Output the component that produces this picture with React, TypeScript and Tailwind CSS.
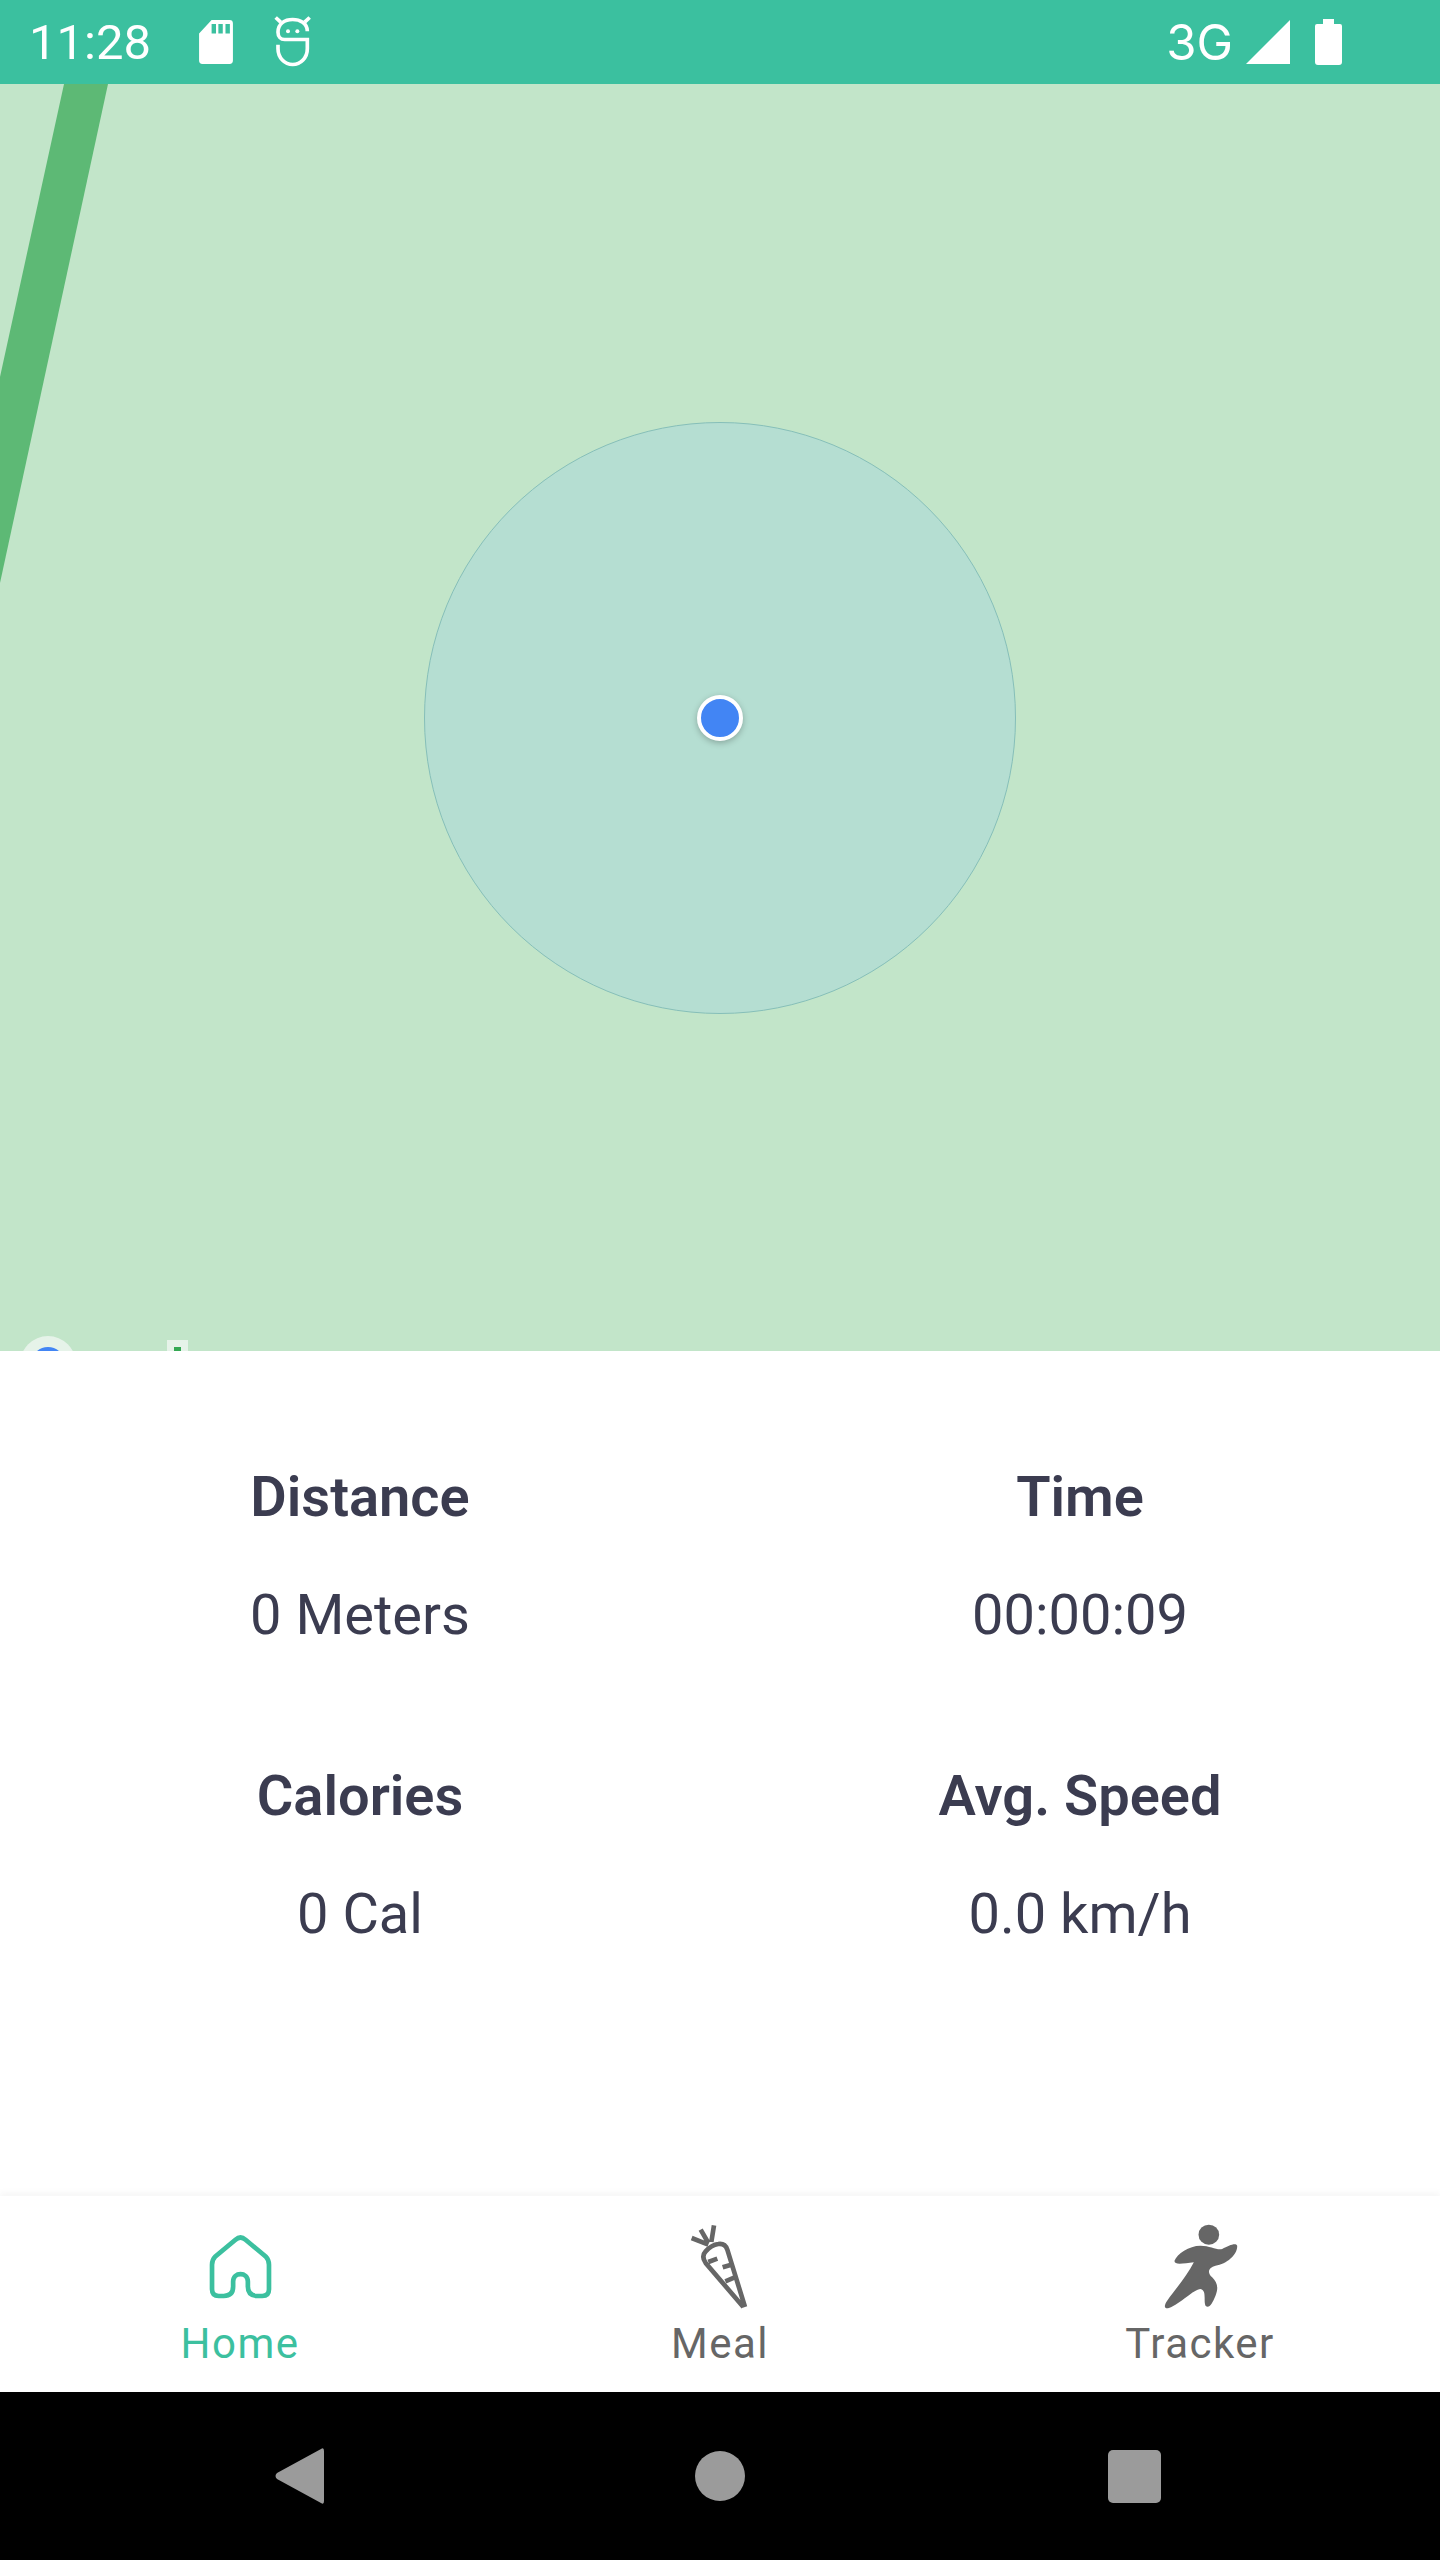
function SdCardIcon() {
  return (
    <svg viewBox="0 0 100 130" className="h-[44px] w-[34px]">
      <path
        fillRule="evenodd"
        fill="#fff"
        d="M37 0H90Q100 0 100 10V120Q100 130 90 130H10Q0 130 0 120V40ZM37 12V40H50V12ZM57 12V40H70V12ZM78 12V40H91V12Z"
      />
    </svg>
  );
}

function DroidIcon() {
  return (
    <svg viewBox="25 20 120 155" className="mb-[1px] h-[52px] w-[40px]" fill="none" stroke="#fff" strokeWidth="11">
      <path d="M128 65C128 40 105 30 84 30C60 30 40 42 40 68C40 82 48 90 60 90H128V118C128 145 108 165 84 165C60 165 40 145 40 118V106" />
      <path d="M33 24L48 38M135 24L120 38" />
      <circle cx="70" cy="65" r="6" fill="#fff" stroke="none" />
      <circle cx="98" cy="65" r="6" fill="#fff" stroke="none" />
    </svg>
  );
}

function SignalIcon() {
  return (
    <svg viewBox="0 0 44 44" className="h-[44px] w-[44px]">
      <path d="M44 0V44H0Z" fill="#fff" />
    </svg>
  );
}

function BatteryIcon() {
  return (
    <svg viewBox="0 0 27 46" className="h-[46px] w-[27px]">
      <path d="M8 0H19V5H25Q27 5 27 7V43Q27 46 24 46H3Q0 46 0 43V7Q0 5 2 5H8Z" fill="#fff" />
    </svg>
  );
}

function HomeIcon() {
  return (
    <svg viewBox="200 155 200 200" className="mb-[7px] h-[67px] w-[67px]" fill="none" stroke="#3cc09f" strokeWidth="14">
      <path d="M235 343H250Q278 343 278 315V300C278 270 322 270 322 300V315Q322 343 350 343H365Q385 343 385 323V250Q385 235 375 225L315 175Q300 162 285 175L225 225Q215 235 215 250V323Q215 343 235 343Z" />
    </svg>
  );
}

function CarrotIcon() {
  return (
    <svg viewBox="150 68 180 255" className="-mb-[2px] h-[85px] w-[60px]" fill="none" stroke="#666" strokeWidth="14">
      <path d="M315 317L262 145Q255 125 235 128Q215 130 197 150Q183 165 197 185L310 317" />
      <path d="M205 130L155 110M205 125L182 85M214 122L222 72" />
      <path d="M205 182L232 172M248 198L274 190M256 240L284 228" />
    </svg>
  );
}

function RunnerIcon() {
  return (
    <svg viewBox="185 70 230 258" className="-mb-[3px] h-[86px] w-[77px]" fill="#666">
      <ellipse cx="325" cy="102" rx="31" ry="30" />
      <path d="M222 180C230 160 265 135 300 135C330 135 350 150 365 145C385 135 405 125 410 135C412 160 380 190 345 195C325 200 318 215 335 230C350 245 355 260 345 285C335 310 325 325 315 315C308 300 320 270 300 265C280 265 240 310 205 322C190 325 190 315 200 300C225 265 260 225 280 185C250 188 220 195 222 180Z" />
    </svg>
  );
}

function Stat({ label, value }: { label: string; value: string }) {
  return (
    <div className="flex flex-col items-center">
      <div className="text-[56px] leading-[62px] font-semibold text-[#3b3c50]">{label}</div>
      <div className="mt-[56px] text-[56px] leading-[62px] text-[#3b3c50]">{value}</div>
    </div>
  );
}

function NavItem({ label, active, children }: { label: string; active?: boolean; children: React.ReactNode }) {
  return (
    <div className="flex w-[480px] flex-col items-center">
      <div className="flex h-[92px] items-end justify-center">{children}</div>
      <div
        className={
          "mt-[12px] text-[42px] leading-[50px] tracking-[0.035em] " +
          (active ? "text-[#3cc09f]" : "text-[#666666]")
        }
      >
        {label}
      </div>
    </div>
  );
}

export default function App() {
  return (
    <div className="flex h-[2560px] w-[1440px] flex-col bg-white font-['Roboto',sans-serif]">
      {/* status bar */}
      <div className="flex h-[84px] items-center bg-[#3bc09f] pl-[29px] pr-[98px] text-white">
        <span className="text-[49px] leading-none">11:28</span>
        <div className="ml-[48px]">
          <SdCardIcon />
        </div>
        <div className="ml-[40px]">
          <DroidIcon />
        </div>
        <span className="ml-auto text-[49px] leading-none font-['Inter',sans-serif]">3G</span>
        <div className="ml-[13px]">
          <SignalIcon />
        </div>
        <div className="ml-[25px]">
          <BatteryIcon />
        </div>
      </div>

      {/* map */}
      <div className="relative flex h-[1267px] items-center justify-center overflow-hidden bg-[#c2e5c9]">
        <svg viewBox="0 0 120 510" className="absolute left-0 top-0 h-[510px] w-[120px]">
          <path d="M64 0H108L0 499V293Z" fill="#5db975" />
        </svg>
        <div className="flex h-[592px] w-[592px] items-center justify-center rounded-full border border-[#86bfb9] bg-[#b5ded2]">
          <div className="h-[46px] w-[46px] rounded-full border-[4px] border-white bg-[#4285f4] shadow-[0_2px_6px_rgba(0,0,0,0.25)]" />
        </div>
        {/* cut-off google logo */}
        <div className="absolute left-[20px] top-[1252px] flex h-[56px] w-[56px] items-center justify-center rounded-full bg-[#e6f3e9]">
          <div className="h-[34px] w-[34px] rounded-full border-[7px] border-[#4285f4]" />
        </div>
        <div className="absolute left-[167px] top-[1256px] flex h-[30px] w-[21px] justify-center bg-[#e6f3e9] pt-[7px]">
          <div className="h-[20px] w-[7px] bg-[#34a853]" />
        </div>
      </div>

      {/* stats */}
      <div className="flex-1 pt-[115px]">
        <div className="grid grid-cols-2 gap-y-[119px]">
          <Stat label="Distance" value="0 Meters" />
          <Stat label="Time" value="00:00:09" />
          <Stat label="Calories" value="0 Cal" />
          <Stat label="Avg. Speed" value="0.0 km/h" />
        </div>
      </div>

      {/* bottom tabs */}
      <div className="flex h-[196px] pt-[19px] shadow-[0_-4px_6px_rgba(0,0,0,0.035)]">
        <NavItem label="Home" active>
          <HomeIcon />
        </NavItem>
        <NavItem label="Meal">
          <CarrotIcon />
        </NavItem>
        <NavItem label="Tracker">
          <RunnerIcon />
        </NavItem>
      </div>

      {/* android nav */}
      <div className="flex h-[168px] items-center bg-black">
        <div className="flex w-[480px] justify-end pr-[155px]">
          <svg viewBox="0 0 50 56" className="h-[56px] w-[50px]">
            <path d="M46 1Q49 -1 49 3V53Q49 57 46 55L2 31Q-1 28 2 25Z" fill="#9b9b9b" />
          </svg>
        </div>
        <div className="flex w-[480px] justify-center">
          <div className="h-[50px] w-[50px] rounded-full bg-[#9b9b9b]" />
        </div>
        <div className="flex w-[480px] justify-start pl-[148px]">
          <div className="h-[53px] w-[53px] rounded-[5px] bg-[#9b9b9b]" />
        </div>
      </div>
    </div>
  );
}
